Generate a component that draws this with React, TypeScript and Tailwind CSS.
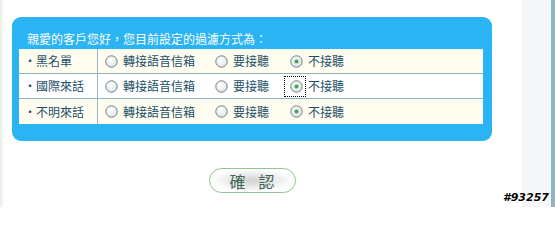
const rows = [
  { label: "黑名單", bg: "bg-[#fffdf0]", focus: false },
  { label: "國際來話", bg: "bg-white", focus: true },
  { label: "不明來話", bg: "bg-[#fffdf0]", focus: false },
];

function Radio({ checked }: { checked?: boolean }) {
  return (
    <svg width="13" height="13" viewBox="0 0 13 13" className="shrink-0">
      <defs>
        <radialGradient id="rg" cx="0.4" cy="0.35" r="0.7">
          <stop offset="0" stopColor="#ffffff" />
          <stop offset="1" stopColor="#dfe3e6" />
        </radialGradient>
      </defs>
      <circle cx="6.5" cy="6.5" r="5.7" fill="url(#rg)" stroke="#6f7c86" strokeWidth="1" />
      {checked && (
        <>
          <circle cx="6.5" cy="6.5" r="3" fill="#cfe8cf" />
          <circle cx="6.5" cy="6.5" r="1.8" fill="#3f9a4a" />
        </>
      )}
    </svg>
  );
}

export default function App() {
  return (
    <div
      className="relative flex w-[555px] h-[207px] overflow-hidden bg-white text-[12px] leading-4"
      style={{ fontFamily: '"Noto Sans CJK TC", "Noto Sans", sans-serif' }}
    >
      <div className="w-[3px] bg-[#eaf5e8] border-r border-[#f3f9f2]" />

      <div className="w-[519px] pl-[9px] pt-[17px]">
        <div className="w-[480px] h-[124px] rounded-[9px] bg-[#2bb4f4] pl-[7px] pr-[9px]">
          <div className="h-[32px] pt-[14px] pl-[8px] text-white">
            親愛的客戶您好，您目前設定的過濾方式為：
          </div>
          <div className="flex flex-col">
            {rows.map((r, i) => (
              <div
                key={r.label}
                className={`flex h-[25px] ${r.bg} ${i < 2 ? "border-b border-[#8fb1c2]" : ""}`}
              >
                <div className="w-[79px] border-r border-[#9db6c3] pl-[5px] flex items-center text-[#1c4f68]">
                  ‧{r.label}
                </div>
                <div className="flex items-center pl-[7px] text-[#1c4f68]">
                  <div className="flex items-center gap-[5px] w-[110px]">
                    <Radio />
                    <span>轉接語音信箱</span>
                  </div>
                  <div className="flex items-center gap-[5px] w-[69px]">
                    <Radio />
                    <span>要接聽</span>
                  </div>
                  <div className="flex items-center gap-[2px]">
                    <div
                      className={`flex items-center justify-center w-[22px] h-[21px] pl-[2px] ${
                        r.focus ? "border border-dotted border-black" : ""
                      }`}
                    >
                      <Radio checked />
                    </div>
                    <span>不接聽</span>
                  </div>
                </div>
              </div>
            ))}
          </div>
        </div>

        <div className="flex justify-center w-[480px] mt-[27px]">
          <button className="flex items-center justify-center gap-[13px] w-[87px] h-[25px] rounded-full border border-[#93c591] bg-[radial-gradient(ellipse_at_center,#cfd2d1_0%,#ffffff_70%)] text-[16px] text-[#3d6656]">
            <span>確</span>
            <span>認</span>
          </button>
        </div>
      </div>

      <div className="w-[29px] bg-[#f5f6f7]" />
      <div className="w-[4px] bg-[#8fb4c8]" />

      <div
        className="absolute right-[6px] bottom-[4px] text-[11px] font-bold italic leading-none text-black [text-shadow:0_0_1px_#fff,1px_1px_0_#fff,-1px_-1px_0_#fff]"
        style={{ fontFamily: '"DejaVu Sans", sans-serif' }}
      >
        #93257
      </div>
    </div>
  );
}
